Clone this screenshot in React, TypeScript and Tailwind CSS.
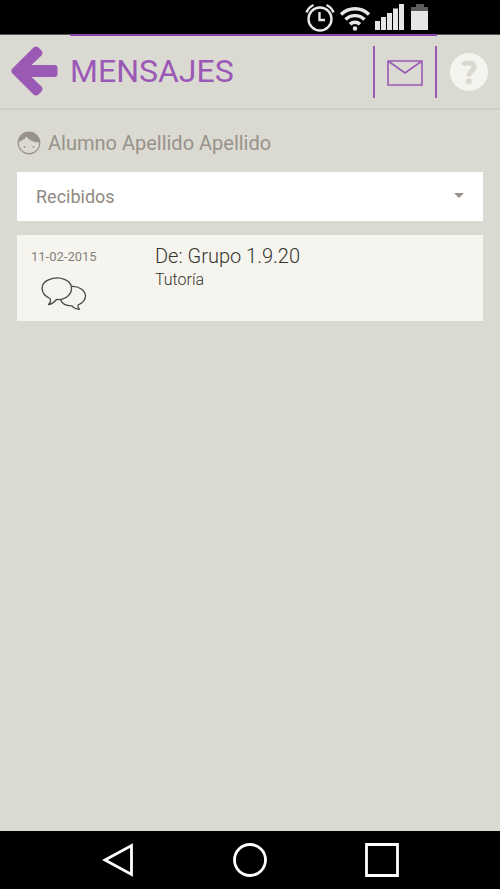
type Message = {
  id: number
  date: string
  from: string
  subject: string
}

const MESSAGES: Message[] = [
  { id: 1, date: '11-02-2015', from: 'Grupo 1.9.20', subject: 'Tutoría' },
]

function StatusBar() {
  return (
    <div className="flex h-[34px] shrink-0 items-center justify-end gap-1 bg-black pr-[68px] text-[#e6e6e6]">
      {/* Alarm */}
      <svg viewBox="0 0 30 30" className="h-[30px] w-[30px]" fill="none" stroke="currentColor" strokeWidth="2.4">
        <circle cx="15" cy="17" r="11.500" />
        <path d="M14.5 10v8h5.5M1.5 10.5a14 14 0 0 1 7-7.5M28.5 10.5a14 14 0 0 0-7-7.5" />
      </svg>
      {/* Wifi */}
      <svg viewBox="0 0 32 30" className="h-[30px] w-8" fill="none" stroke="currentColor" strokeWidth="3.4">
        <path d="M2 12.5a20 20 0 0 1 28 0M6.5 17.5a13.5 13.5 0 0 1 19 0M11 22.3a7.2 7.2 0 0 1 10 0" />
        <circle cx="16" cy="26.5" r="2.2" fill="currentColor" stroke="none" />
      </svg>
      {/* Signal */}
      <svg viewBox="0 0 29 30" className="h-[30px] w-[29px]" fill="currentColor">
        <path d="M0 19h5v9H0zM6 15h5v13H6zM12 11h5v17h-5zM18 6.5h5V28h-5zM24 2h5v26h-5z" />
      </svg>
      {/* Battery */}
      <svg viewBox="0 0 24 30" className="h-[30px] w-6" fill="currentColor">
        <path d="M3 5h5V2h8v3h4v4H3z" fill="#5c5c5c" />
        <path d="M3 9h17v19H3z" />
      </svg>
    </div>
  )
}

function Header() {
  return (
    <header className="flex h-[76px] shrink-0 items-stretch border-b-2 border-[#cfcfcd] text-[#9b59b6]">
      <button type="button" aria-label="Volver" className="flex w-[70px] items-start border-t border-[#55554f] pt-[11px] pl-[11px]">
        <svg viewBox="0 0 48 50" className="h-[50px] w-12" fill="currentColor">
          <path d="M1.200 22.800L22.500 1.500Q25-0.500 27.500 1.500L30.500 4.500Q32.500 7 30.500 9.500L20.500 19H43.500Q46.500 19 46.500 22V28Q46.500 31 43.500 31H20.500L30.500 40.500Q32.500 43 30.500 45.500L27.500 48.500Q25 50.500 22.500 48.500L1.200 27.200Q-0.500 25 1.200 22.800Z" />
        </svg>
      </button>
      <div className="flex flex-1 items-stretch border-t-2 border-[#8e44ad]">
        <h1 className="flex-1 pt-4 text-[32px] leading-[38px]">MENSAJES</h1>
        <button
          type="button"
          aria-label="Nuevo mensaje"
          className="my-[10px] flex w-16 items-center justify-center border-x-2 border-[#9b59b6] pt-[2px]"
        >
          <svg viewBox="0 0 36 26" className="h-[26px] w-9" fill="none" stroke="currentColor" strokeWidth="1.6">
            <path d="M1 1h34v24H1zM1 1l17 12L35 1" />
          </svg>
        </button>
      </div>
      <button type="button" aria-label="Ayuda" className="flex w-[63px] items-center justify-center border-t border-[#55554f]">
        <svg viewBox="0 0 38 38" className="h-[38px] w-[38px]">
          <circle cx="19" cy="19" r="19" fill="#f6f4ef" />
          <path
            d="M12.8 12.2C15 9 24.2 8.800 24.2 14C24.200 18 18.800 18.500 18.800 23.500"
            fill="none"
            stroke="#dbdad2"
            strokeWidth="5"
          />
          <circle cx="18.8" cy="28.300" r="3" fill="#dbdad2" />
        </svg>
      </button>
    </header>
  )
}

function StudentName({ name }: { name: string }) {
  return (
    <div className="flex items-center gap-[7px] text-[#98928a]">
      <svg viewBox="0 0 24 24" className="h-6 w-6" fill="none" stroke="currentColor">
        <circle cx="12" cy="12" r="10.800" strokeWidth="1.2" />
        <path d="M1 11.5C2 4 6 1 12 1s10.500 4.500 11 10.500C17.500 11.500 12.500 9.500 9.500 5.500C8 8.500 4 10 1 11.500Z" fill="currentColor" stroke="none" />
        <circle cx="7.5" cy="16" r="0.9" fill="currentColor" stroke="none" />
        <circle cx="16.5" cy="16" r="0.9" fill="currentColor" stroke="none" />
      </svg>
      <span className="text-xl leading-6">{name}</span>
    </div>
  )
}

function FolderSelect() {
  return (
    <div className="relative">
      <select
        aria-label="Carpeta"
        defaultValue="recibidos"
        className="h-[49px] w-full appearance-none rounded-none bg-white px-[19px] text-lg text-[#8f8981]"
      >
        <option value="recibidos">Recibidos</option>
        <option value="enviados">Enviados</option>
      </select>
      <svg viewBox="0 0 10 5" className="pointer-events-none absolute top-[21px] right-[19px] h-[5px] w-[10px]" fill="#98928a">
        <path d="M0 0h10L5 5z" />
      </svg>
    </div>
  )
}

function ChatIcon() {
  return (
    <svg viewBox="0 0 46 34" className="h-[34px] w-[46px]" fill="none" stroke="#4a4945" strokeWidth="1.3" strokeLinejoin="round">
      <path d="M9 21.5C-1 17-1.5 6.5 7.5 2.8C19-2 31 3.5 30.5 12C30 19 22.5 23.3 15.5 22.5C13.5 25 11 27 7.5 27.5C9.5 25.5 10 23.5 9 21.5Z" />
      <path d="M30.3 9.5C38 9 44.5 13.5 44.5 19C44.5 23.5 41.5 26 37 28C36.5 29.5 37 30.5 38.5 32.3C35 32 32.5 31 31 28.8C25.5 29 21 26.5 19.5 22.5" />
    </svg>
  )
}

function MessageItem({ message }: { message: Message }) {
  return (
    <li>
      <a href="#mensaje" className="flex min-h-[86px] bg-[#f6f4ef] pl-[14px]">
        <div className="flex w-[124px] flex-col items-start gap-3 pt-[14px]">
          <span className="text-[13px] leading-4 text-[#85817a]">{message.date}</span>
          <span className="pl-[10px]">
            <ChatIcon />
          </span>
        </div>
        <div className="flex flex-1 flex-col pt-2 font-light text-[#35342f]">
          <span className="text-xl leading-[26px]">De: {message.from}</span>
          <span className="text-base leading-[22px]">{message.subject}</span>
        </div>
      </a>
    </li>
  )
}

function NavBar() {
  return (
    <nav className="flex h-[58px] shrink-0 items-center justify-center gap-[98px] bg-black text-white">
      <button type="button" aria-label="Atrás">
        <svg viewBox="0 0 34 34" className="h-[34px] w-[34px]" fill="none" stroke="currentColor" strokeWidth="2.8">
          <path d="M4 17L30.5 2.5v29z" />
        </svg>
      </button>
      <button type="button" aria-label="Inicio">
        <svg viewBox="0 0 34 34" className="h-[34px] w-[34px]" fill="none" stroke="currentColor" strokeWidth="2.8">
          <circle cx="17" cy="17" r="15.5" />
        </svg>
      </button>
      <button type="button" aria-label="Recientes">
        <svg viewBox="0 0 34 34" className="h-[34px] w-[34px]" fill="none" stroke="currentColor" strokeWidth="2.8">
          <path d="M1.5 1.5h31v31h-31z" />
        </svg>
      </button>
    </nav>
  )
}

export default function App() {
  return (
    <div className="flex min-h-screen flex-col bg-[#dbdad2] font-['Roboto',sans-serif]">
      <StatusBar />
      <Header />
      <main className="flex flex-1 flex-col px-[17px] pt-[21px]">
        <StudentName name="Alumno Apellido Apellido" />
        <div className="pt-[17px]">
          <FolderSelect />
        </div>
        <ul className="flex flex-col gap-[14px] pt-[14px]">
          {MESSAGES.map((m) => (
            <MessageItem key={m.id} message={m} />
          ))}
        </ul>
      </main>
      <NavBar />
    </div>
  )
}
